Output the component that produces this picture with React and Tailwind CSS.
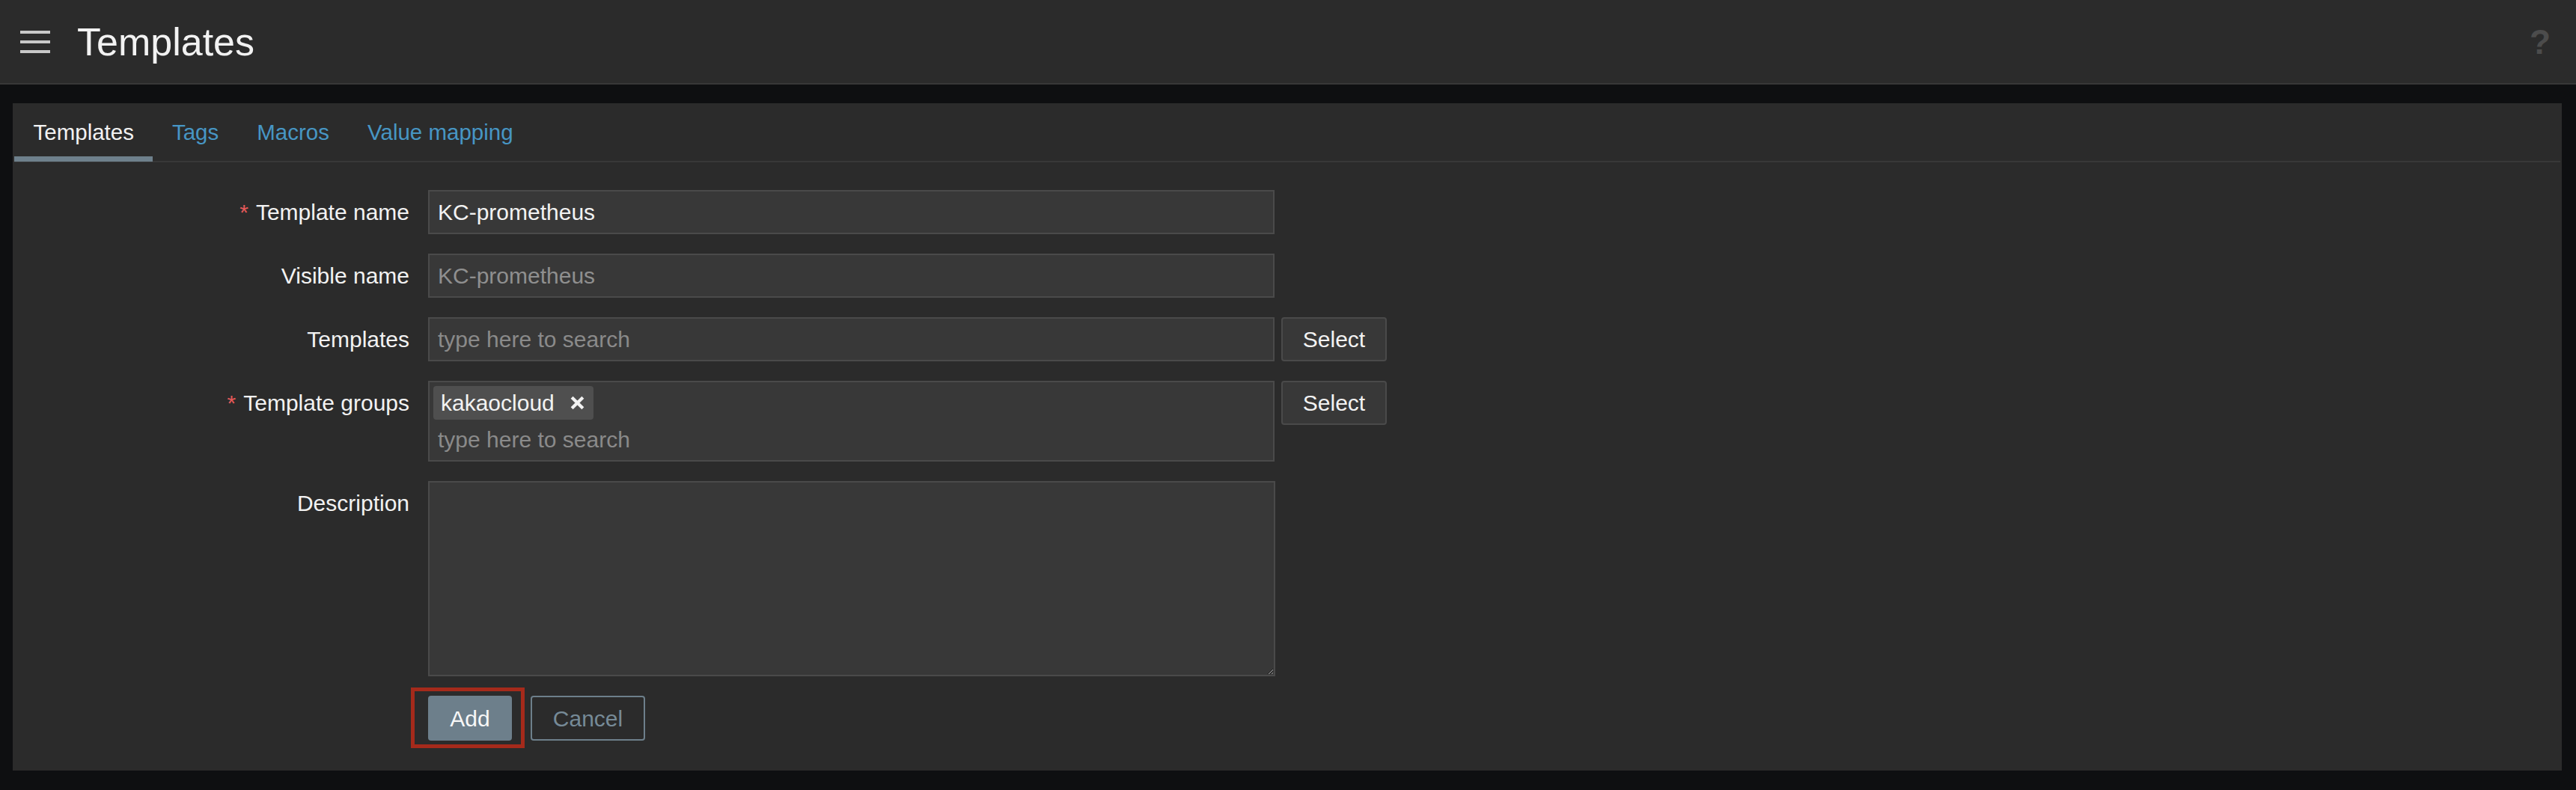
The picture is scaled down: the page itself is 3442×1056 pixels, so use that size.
import { useState } from 'react';

const tabs = ['Templates', 'Tags', 'Macros', 'Value mapping'];

function Label({ required, children }) {
  return (
    <div className="w-[530px] shrink-0 pt-[13px] text-right text-[30px] leading-[33px] text-[#f2f2f2]">
      {required && <span className="mr-[10px] text-[#e45959]">*</span>}
      {children}
    </div>
  );
}

function SelectButton() {
  return (
    <button className="ml-[9px] flex h-[59px] w-[141px] shrink-0 items-center justify-center rounded-[4px] border-2 border-[#4a4a4a] bg-[#383838] text-[30px] text-[#f2f2f2]">
      Select
    </button>
  );
}

export default function App() {
  const [active, setActive] = useState('Templates');
  const [name, setName] = useState('KC-prometheus');

  return (
    <div className="flex h-[1056px] w-[3442px] flex-col bg-[#0e0f11] font-['Liberation_Sans',Arial,sans-serif]">
      {/* header */}
      <div className="flex h-[113px] shrink-0 items-center justify-between border-b-2 border-[#383838] bg-[#2b2b2b] pl-[27px] pr-[34px]">
        <div className="flex items-center gap-[36px]">
          <div className="flex w-[40px] flex-col gap-[9px]">
            <span className="h-[4px] w-full bg-[#c8c8c8]" />
            <span className="h-[4px] w-full bg-[#c8c8c8]" />
            <span className="h-[4px] w-full bg-[#c8c8c8]" />
          </div>
          <h1 className="text-[52px] leading-none text-[#f2f2f2]">Templates</h1>
        </div>
        <span className="text-[46px] font-bold leading-none text-[#4c4c4c]">?</span>
      </div>

      {/* panel */}
      <div className="ml-[17px] mr-[19px] mt-[25px] h-[892px] bg-[#2b2b2b]">
        <div className="mx-[2px] flex h-[79px] border-b-2 border-[#383838]">
          {tabs.map((t) => (
            <a
              key={t}
              href="#"
              onClick={(e) => {
                e.preventDefault();
                setActive(t);
              }}
              className={`block h-[78px] px-[25.5px] pt-[22px] text-[29.5px] leading-[33px] ${
                active === t
                  ? 'border-b-[7px] border-[#6e808c] text-[#f2f2f2]'
                  : 'text-[#4796c4]'
              }`}
            >
              {t}
            </a>
          ))}
        </div>

        <div className="mt-[37px] flex flex-col gap-[26px]">
          <div className="flex">
            <Label required>Template name</Label>
            <input
              value={name}
              onChange={(e) => setName(e.target.value)}
              className="ml-[25px] h-[59px] w-[1131px] border-2 border-[#4a4a4a] bg-[#383838] px-[11px] text-[30px] text-[#f2f2f2] outline-none"
            />
          </div>

          <div className="flex">
            <Label>Visible name</Label>
            <input
              placeholder={name}
              className="ml-[25px] h-[59px] w-[1131px] border-2 border-[#4a4a4a] bg-[#383838] px-[11px] text-[30px] text-[#f2f2f2] outline-none placeholder:text-[#8f8f8f]"
            />
          </div>

          <div className="flex">
            <Label>Templates</Label>
            <input
              placeholder="type here to search"
              className="ml-[25px] h-[59px] w-[1131px] border-2 border-[#4a4a4a] bg-[#383838] px-[11px] text-[30px] text-[#f2f2f2] outline-none placeholder:text-[#8a8a8a]"
            />
            <SelectButton />
          </div>

          <div className="flex items-start">
            <Label required>Template groups</Label>
            <div className="ml-[25px] flex h-[108px] w-[1131px] flex-col border-2 border-[#4a4a4a] bg-[#383838] pl-[5px] pt-[5px]">
              <div className="flex h-[45px] w-[214px] items-center rounded-[4px] bg-[#4f4f4f] pl-[10px] text-[30px] text-[#f2f2f2]">
                <span>kakaocloud</span>
                <svg className="ml-[20px]" width="21" height="21" viewBox="0 0 20 20">
                  <path d="M3 3L17 17M17 3L3 17" stroke="#f2f2f2" strokeWidth="4" />
                </svg>
              </div>
              <input
                placeholder="type here to search"
                className="mt-[10px] h-[33px] bg-transparent pl-[6px] text-[30px] text-[#f2f2f2] outline-none placeholder:text-[#8a8a8a]"
              />
            </div>
            <SelectButton />
          </div>

          <div className="flex">
            <Label>Description</Label>
            <textarea className="ml-[25px] h-[261px] w-[1132px] border-2 border-[#4a4a4a] bg-[#383838] px-[11px] text-[30px] text-[#f2f2f2] outline-none [color-scheme:dark]" />
          </div>

          <div className="ml-[555px] flex gap-[25px]">
            <div className="relative">
              <button className="h-[60px] w-[112px] rounded-[4px] bg-[#6d7f8b] text-[30px] text-[#f7f7f7]">
                Add
              </button>
              <div className="pointer-events-none absolute left-[-23px] top-[-11px] h-[81px] w-[152px] border-[5px] border-[#a52a1b]" />
            </div>
            <button className="h-[60px] w-[153px] rounded-[4px] border-2 border-[#6d7f8b] text-[30px] text-[#768a97]">
              Cancel
            </button>
          </div>
        </div>
      </div>
    </div>
  );
}
